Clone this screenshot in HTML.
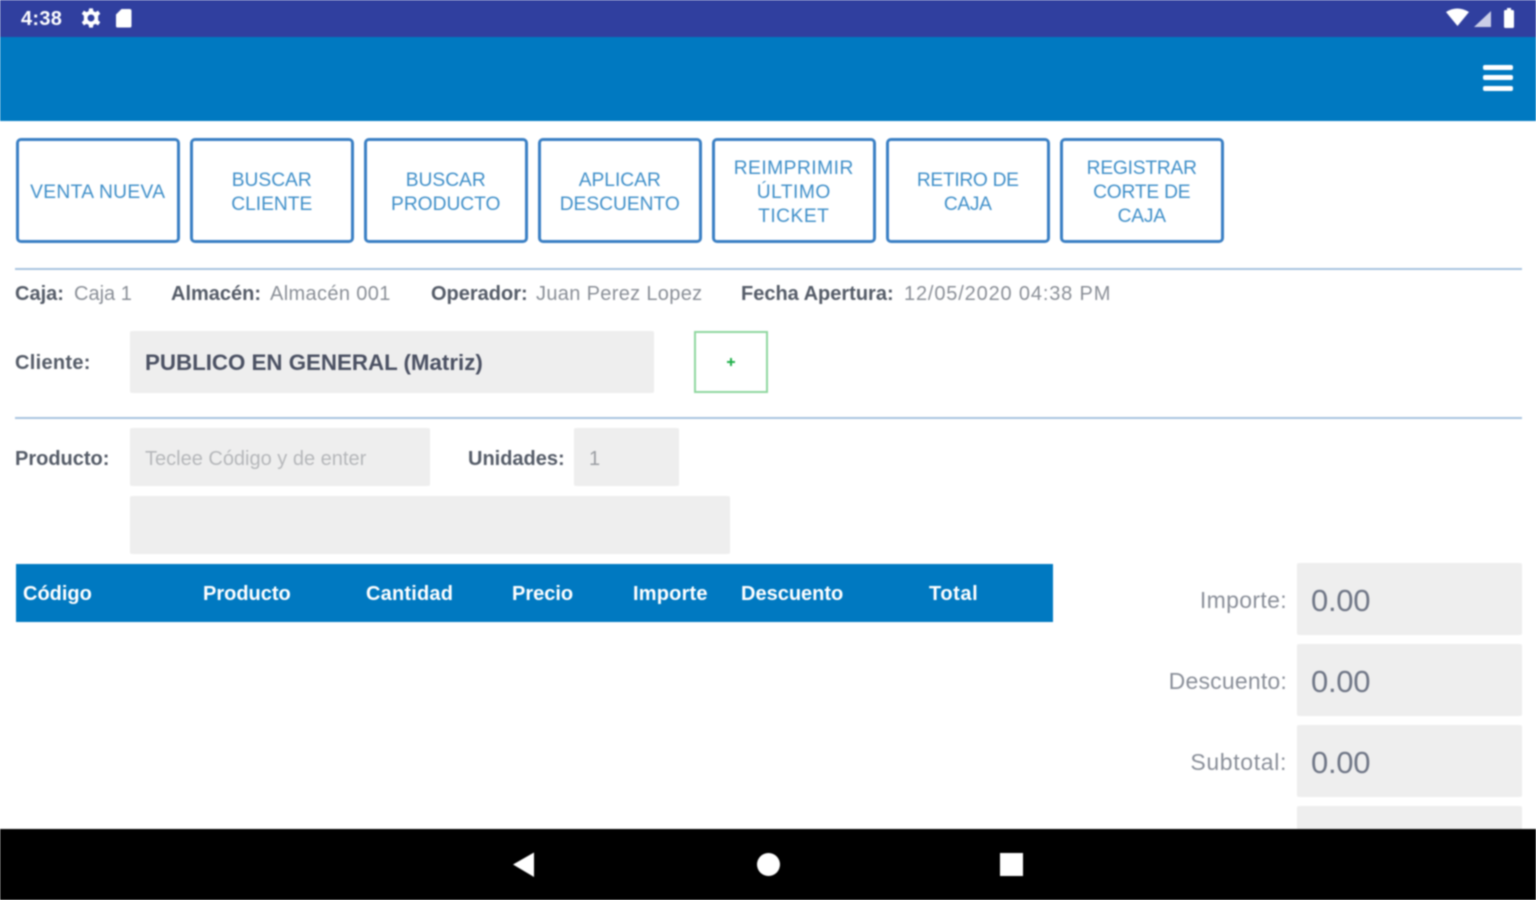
<!DOCTYPE html>
<html lang="es">
<head>
<meta charset="utf-8">
<title>Punto de venta</title>
<style>
html,body{margin:0;padding:0;width:1536px;height:900px;overflow:hidden;background:#fff}
body{position:relative;font-family:"Liberation Sans",sans-serif;color:#6f7680}
.a{position:absolute;white-space:nowrap}
#blur{position:absolute;left:0;top:0;width:1536px;height:900px;filter:blur(.8px);overflow:hidden}
.btn{position:absolute;top:137.5px;width:164.5px;height:105px;box-sizing:border-box;border:3.5px solid #3a7fc4;border-radius:5px;color:#3f8fc9;font-size:19.2px;line-height:24px;padding-top:6px;display:flex;align-items:center;justify-content:center;text-align:center;background:#fff}
.hr{position:absolute;left:15px;width:1507px;height:2px;background:#a9c4e0}
.b{font-weight:bold;color:#555c68;font-size:20px}
.l{font-size:20px;color:#8a8f97}
.box{position:absolute;background:#eeeeee;border-radius:2px}
.th{position:absolute;top:583px;color:#fff;font-weight:bold;font-size:20px;white-space:nowrap}
.sl{position:absolute;right:249px;font-size:23px;color:#8a8f99;white-space:nowrap}
.sv{position:absolute;left:1311px;font-size:31px;color:#6f7686;white-space:nowrap;letter-spacing:-.3px}
</style>
</head>
<body>
<div id="blur">
  <div class="a" style="left:0;top:0;width:1536px;height:36.500px;background:#303f9f"></div>
  <div class="a" style="left:0;top:36.500px;width:1536px;height:84.500px;background:#0079c1"></div>
  <div class="a" style="left:21px;top:8px;font-size:20px;font-weight:bold;color:#fff;letter-spacing:.3px">4:38</div>
  <svg class="a" style="left:80px;top:7px" width="22" height="22" viewBox="0 0 24 24"><path fill="#fff" fill-rule="evenodd" d="M10 1.500H14L14.700 4.700 16.900 5.600 19.700 3.900 22.100 7.300 19.800 9.500V14.500L22.100 16.700 19.700 20.100 16.900 18.400 14.700 19.300 14 22.500H10L9.300 19.300 7.100 18.400 4.300 20.100 1.900 16.700 4.200 14.500V9.500L1.900 7.300 4.300 3.900 7.100 5.600 9.300 4.700ZM12 8.200a3.800 3.800 0 1 0 0 7.600 3.800 3.800 0 0 0 0-7.600Z"/></svg>
  <svg class="a" style="left:114px;top:8px" width="20" height="20" viewBox="0 0 20 20"><path fill="#fff" d="M7.500 1H15.500a2 2 0 0 1 2 2V18a1.500 1.500 0 0 1-1.500 1.500H3.500A1.500 1.500 0 0 1 2 18V6.500Z"/></svg>
  <svg class="a" style="left:1445px;top:6px" width="80" height="24" viewBox="0 0 80 24"><path fill="#fff" d="M1 6Q12 -1 24 6L12.500 20Z"/><path fill="#fff" d="M46 5V21H29Z" opacity=".75"/><path fill="#fff" d="M59 5.500a1.500 1.500 0 0 1 1.500-1.500H62V2H66V4H67.500A1.500 1.500 0 0 1 69 5.500V20.500A1.500 1.500 0 0 1 67.500 22H60.500A1.500 1.500 0 0 1 59 20.500Z"/></svg>
  <div class="a" style="left:1483px;top:65px;width:30px;height:5px;background:#fff;border-radius:2px"></div>
  <div class="a" style="left:1483px;top:75px;width:30px;height:5px;background:#fff;border-radius:2px"></div>
  <div class="a" style="left:1483px;top:85.500px;width:30px;height:5px;background:#fff;border-radius:2px"></div>

  <div class="btn" style="left:15.500px;letter-spacing:.35px">VENTA NUEVA</div>
  <div class="btn" style="left:189.500px">BUSCAR<br>CLIENTE</div>
  <div class="btn" style="left:363.500px">BUSCAR<br>PRODUCTO</div>
  <div class="btn" style="left:537.500px">APLICAR<br>DESCUENTO</div>
  <div class="btn" style="left:711.500px;letter-spacing:.5px">REIMPRIMIR<br>ÚLTIMO<br>TICKET</div>
  <div class="btn" style="left:885.500px;letter-spacing:-.3px">RETIRO DE<br>CAJA</div>
  <div class="btn" style="left:1059.500px;letter-spacing:-.2px">REGISTRAR<br>CORTE DE<br>CAJA</div>

  <div class="hr" style="top:268px"></div>
  <div class="a b" style="left:15px;top:283px">Caja:</div>
  <div class="a l" style="left:74px;top:283px">Caja 1</div>
  <div class="a b" style="left:171px;top:283px">Almacén:</div>
  <div class="a l" style="left:270px;top:283px;letter-spacing:.36px">Almacén 001</div>
  <div class="a b" style="left:431px;top:283px">Operador:</div>
  <div class="a l" style="left:536px;top:283px;letter-spacing:.33px">Juan Perez Lopez</div>
  <div class="a b" style="left:741px;top:283px">Fecha Apertura:</div>
  <div class="a l" style="left:904px;top:283px;letter-spacing:.84px">12/05/2020 04:38 PM</div>

  <div class="a b" style="left:15px;top:352px;letter-spacing:.3px">Cliente:</div>
  <div class="box" style="left:130px;top:331px;width:524px;height:62px"></div>
  <div class="a" style="left:145px;top:350px;font-size:22.300px;font-weight:bold;color:#4b5163">PUBLICO EN GENERAL (Matriz)</div>
  <div class="a" style="left:694px;top:331px;width:74px;height:62px;box-sizing:border-box;border:2px solid #8fd79f"></div>
  <div class="a" style="left:727px;top:361px;width:8px;height:2px;background:#22b14c"></div>
  <div class="a" style="left:730px;top:358px;width:2px;height:8px;background:#22b14c"></div>

  <div class="hr" style="top:417px"></div>
  <div class="a b" style="left:15px;top:448px">Producto:</div>
  <div class="box" style="left:130px;top:428px;width:300px;height:58px"></div>
  <div class="a" style="left:145px;top:448px;font-size:20px;color:#b5b7ba">Teclee Código y de enter</div>
  <div class="a b" style="left:468px;top:448px">Unidades:</div>
  <div class="box" style="left:574px;top:428px;width:105px;height:58px"></div>
  <div class="a" style="left:589px;top:448px;font-size:20px;color:#9a9da2">1</div>
  <div class="box" style="left:130px;top:496px;width:600px;height:58px"></div>

  <div class="a" style="left:16px;top:564px;width:1037px;height:58px;background:#0079c1"></div>
  <div class="th" style="left:23px">Código</div>
  <div class="th" style="left:203px">Producto</div>
  <div class="th" style="left:366px;letter-spacing:.2px">Cantidad</div>
  <div class="th" style="left:512px">Precio</div>
  <div class="th" style="left:633px;letter-spacing:.2px">Importe</div>
  <div class="th" style="left:741px">Descuento</div>
  <div class="th" style="left:929px;letter-spacing:.6px">Total</div>

  <div class="box" style="left:1297px;top:563px;width:225px;height:72px"></div>
  <div class="box" style="left:1297px;top:644px;width:225px;height:72px"></div>
  <div class="box" style="left:1297px;top:725px;width:225px;height:72px"></div>
  <div class="box" style="left:1297px;top:806px;width:225px;height:72px"></div>
  <div class="sl" style="top:587px;letter-spacing:.35px">Importe:</div>
  <div class="sl" style="top:668px;letter-spacing:.2px">Descuento:</div>
  <div class="sl" style="top:749px;letter-spacing:.65px">Subtotal:</div>
  <div class="sv" style="top:583px">0.00</div>
  <div class="sv" style="top:664px">0.00</div>
  <div class="sv" style="top:745px">0.00</div>

  <div class="a" style="left:0;top:829px;width:1536px;height:71px;background:#000"></div>
  <svg class="a" style="left:510px;top:850px" width="28" height="30" viewBox="0 0 28 30"><path fill="#fff" d="M3 14.500 24 2.500V27Z"/></svg>
  <div class="a" style="left:757px;top:853px;width:23px;height:23px;border-radius:50%;background:#fff"></div>
  <div class="a" style="left:1000px;top:853px;width:23px;height:23px;background:#fff"></div>
</div>
</body>
</html>
